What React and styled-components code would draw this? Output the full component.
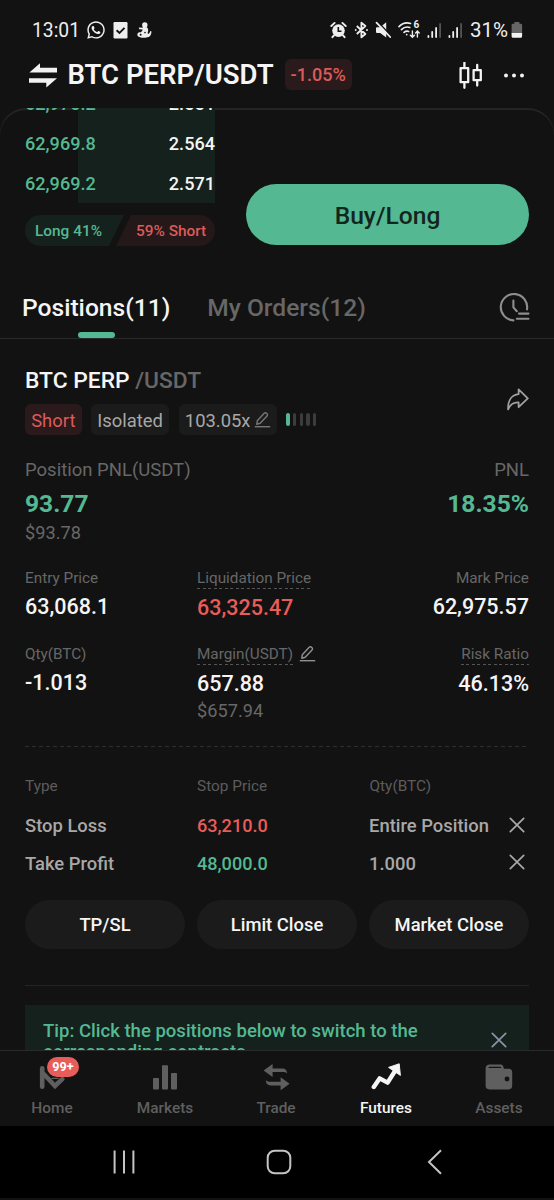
import React from "react";
import styled, { createGlobalStyle } from "styled-components";
import { FaWhatsapp } from "react-icons/fa";

const stops = [
	{ type: "Stop Loss", price: "63,210.0", tone: "red", qty: "Entire Position" },
	{ type: "Take Profit", price: "48,000.0", tone: "green", qty: "1.000" },
];

const bids = [
	{ price: "62,970.2", amount: "2.551" },
	{ price: "62,969.8", amount: "2.564" },
	{ price: "62,969.2", amount: "2.571" },
];

const EditIcon = ({ className }) => (
	<svg className={className} width="17" height="17" viewBox="0 0 17 17" fill="none" stroke="currentColor">
		<path d="M2.8 13.2 3.3 9.7 10.2 2.2a1.6 1.6 0 0 1 2.3 0l.5.5a1.6 1.6 0 0 1 0 2.3L6.2 12.3Z" strokeWidth="1.4" strokeLinejoin="round" />
		<path d="M.8 15.7h15.4" strokeWidth="1.4" />
	</svg>
);

const CloseIcon = () => (
	<svg width="16" height="16" viewBox="0 0 16 16" stroke="currentColor" strokeWidth="1.7" strokeLinecap="round">
		<path d="M1.3 1.3 14.7 14.7M14.7 1.3 1.3 14.7" />
	</svg>
);

function SignalIcon() {
	return (
		<svg width="15" height="17" viewBox="0 0 15 17" fill="currentColor">
			<rect x=".5" y="13" width="1.8" height="3" rx=".9" />
			<rect x="4.3" y="9" width="1.8" height="7" rx=".9" />
			<rect x="8.2" y="5" width="1.8" height="11" rx=".9" />
			<rect x="12.2" y="1" width="1.8" height="15" rx=".9" opacity=".3" />
		</svg>
	);
}

function StatusBar() {
	return (
		<StyledStatus>
			<Clock>13:01</Clock>
			<StatusIcons $gap={7}>
				<FaWhatsapp size={20} />
				<svg width="15" height="18" viewBox="0 0 15 18">
					<rect x=".5" y="1" width="14" height="16.5" rx="1.2" fill="#eee" />
					<path d="M3.6 9.2 6.5 12l5-5.2" fill="none" stroke="#121212" strokeWidth="1.9" />
				</svg>
				<svg width="19" height="18" viewBox="-1 0 19 18">
					<circle cx="8.8" cy="4" r="2.7" fill="#eee" />
					<path d="M7 5.6c2.800-.6 5.200 1 5.200 3.400 0 1.800-.8 2.600-.4 3.600.9.7 1.900-.3 2.400-2.600l1.300.4c-.2 3.600-1.800 5.800-4.300 5.800-2 .8-5 .8-7.200 0C2 16 1 14.600 1.400 13c.4-1.400 1.800-1.800 3.200-1.600 1.200-.6 2-1.600 2-2.800l-3.400-.4-.4-1.600 3.800.2z" fill="#eee" />
					<circle cx="4.6" cy="13.8" r="1" fill="#121212" />
					<circle cx="9" cy="11.6" r=".8" fill="#121212" />
				</svg>
			</StatusIcons>
			<StatusIcons $gap={6.3} $end>
				<svg width="17" height="18" viewBox="0 0 17 18">
					<circle cx="8.5" cy="9.6" r="6.3" fill="#eee" />
					<path d="M8.3 6v4.3h3.2" fill="none" stroke="#121212" strokeWidth="1.6" />
					<path d="M1.3 5 4.6 1.9M15.7 5 12.4 1.9M4 14.3 2.4 16.2M13 14.3l1.6 1.9" stroke="#eee" strokeWidth="1.9" strokeLinecap="round" />
				</svg>
				<svg width="15" height="18" viewBox="0 0 15 18" fill="none" stroke="#eee" strokeWidth="1.8">
					<path d="M2.8 5l8.6 8-4 3.4V1.6l4 3.4-8.6 8" strokeLinejoin="round" />
					<circle cx="1.7" cy="9" r=".6" fill="#eee" strokeWidth="1" />
					<circle cx="13" cy="9" r=".6" fill="#eee" strokeWidth="1" />
				</svg>
				<svg width="17" height="18" viewBox="0 0 17 18">
					<path d="M2 6.2h3.2L11.2 1.2V16.5L5.2 12H2a1 1 0 0 1-1-1V7.2a1 1 0 0 1 1-1z" fill="#eee" />
					<path d="M2.6.6 17 15.8" stroke="#121212" strokeWidth="1.4" />
					<path d="M1.5 1.6 15.2 16" stroke="#eee" strokeWidth="1.8" strokeLinecap="round" />
				</svg>
				<WifiBox>
					<svg width="22" height="18" viewBox="0 0 22 18" fill="none" stroke="#eee" strokeWidth="1.6" strokeLinecap="round">
						<path d="M1 5.6C4.2 2.3 8.4 1.2 12.6 2.4" />
						<path d="M3.4 8.6c2.4-2.4 5.4-3.1 8.4-2.2" />
						<path d="M6 11.4c1.4-1.2 3-1.6 4.7-1" />
						<circle cx="8.7" cy="13.6" r=".9" fill="#eee" stroke="none" />
						<path d="M14.4 10v6M12.4 14.2l2 2 2-2M19.4 16v-5.6M17.6 12l1.8-1.9L21.2 12" strokeWidth="1.4" />
					</svg>
					<WifiSix>6</WifiSix>
				</WifiBox>
				<SignalIcon />
				<SignalIcon />
			</StatusIcons>
			<Battery>31%</Battery>
			<svg width="12" height="18" viewBox="0 0 12 18">
				<path d="M3.4 1h5v1.7h1.4A1.3 1.3 0 0 1 11.1 4v9H.6V4a1.3 1.3 0 0 1 1.3-1.3h1.5z" fill="#666" />
				<path d="M.6 12h10.5v3.2a1.5 1.5 0 0 1-1.5 1.5H2.1A1.5 1.5 0 0 1 .6 15.2z" fill="#f2f2f2" />
			</svg>
		</StyledStatus>
	);
}

function Header() {
	return (
		<StyledHeader>
			<svg width="28" height="25" viewBox="0 0 28 25" fill="#f2f2f2">
				<path d="M.4 9.4 11 .2v4.6h17v4.6zM28 15.2 17.3 24.4v-4.6H0v-4.6z" />
			</svg>
			<Pair>BTC PERP/USDT</Pair>
			<ChangeBadge>-1.05%</ChangeBadge>
			<HeaderActions>
				<svg width="24" height="27" viewBox="0 0 24 27" fill="none" stroke="#f2f2f2" strokeWidth="2.3">
					<path d="M1.6 6.2h7.6v14H1.6zM5.4.6v5.6M5.4 20.2v5.6M14.6 8.2h7.2v10h-7.2zM18.2 3v5.2M18.2 18.2v5.4" strokeLinejoin="round" strokeLinecap="round" />
				</svg>
				<svg width="20" height="5" viewBox="0 0 20 5" fill="#f2f2f2">
					<circle cx="2" cy="2.5" r="2" />
					<circle cx="10" cy="2.5" r="2" />
					<circle cx="18" cy="2.5" r="2" />
				</svg>
			</HeaderActions>
		</StyledHeader>
	);
}

function OrderBook() {
	return (
		<Book>
			<Bids>
				{bids.map((b) => (
					<BidRow key={b.price}>
						<span>{b.price}</span>
						<b>{b.amount}</b>
					</BidRow>
				))}
			</Bids>
			<Ratio>
				<RatioSide $long>Long 41%</RatioSide>
				<RatioSide>59% Short</RatioSide>
			</Ratio>
		</Book>
	);
}

function Position() {
	return (
		<Card>
			<TitleRow>
				BTC PERP <span>/USDT</span>
			</TitleRow>
			<Tags>
				<Tag $short>Short</Tag>
				<Tag>Isolated</Tag>
				<Tag>
					103.05x <TagEdit />
				</Tag>
				<Meter>
					<i />
					<i />
					<i />
					<i />
					<i />
				</Meter>
				<Share width="22" height="23" viewBox="0 0 22 23" fill="none" stroke="#a0a0a0" strokeWidth="1.8" strokeLinejoin="round">
					<path d="M11.6 1.4 20.8 10.4 11.6 19.2V14.4C6.6 14 3.4 16 1.1 21.4.8 12.8 4.6 7 11.6 6.2Z" />
				</Share>
			</Tags>
			<PnlHead>
				<span>Position PNL(USDT)</span>
				<span>PNL</span>
			</PnlHead>
			<PnlRow>
				<span>93.77</span>
				<span>18.35%</span>
			</PnlRow>
			<Sub>$93.78</Sub>
			<Stats>
				<Stat>
					<Label>Entry Price</Label>
					<Value>63,068.1</Value>
				</Stat>
				<Stat>
					<Label $dashed>Liquidation Price</Label>
					<Value $tone="red">63,325.47</Value>
				</Stat>
				<Stat $end>
					<Label>Mark Price</Label>
					<Value>62,975.57</Value>
				</Stat>
				<Stat>
					<Label>Qty(BTC)</Label>
					<Value>-1.013</Value>
				</Stat>
				<Stat>
					<LabelLine>
						<Label $dashed>Margin(USDT)</Label>
						<EditIcon />
					</LabelLine>
					<Value>657.88</Value>
					<MarginSub>$657.94</MarginSub>
				</Stat>
				<Stat $end>
					<Label $dashed>Risk Ratio</Label>
					<Value>46.13%</Value>
				</Stat>
			</Stats>
			<StopTable>
				<StopHead>
					<span>Type</span>
					<span>Stop Price</span>
					<span>Qty(BTC)</span>
				</StopHead>
				{stops.map((s) => (
					<StopRow key={s.type}>
						<span>{s.type}</span>
						<StopPrice $tone={s.tone}>{s.price}</StopPrice>
						<span>{s.qty}</span>
						<CloseIcon />
					</StopRow>
				))}
			</StopTable>
			<Actions>
				<ActionButton>TP/SL</ActionButton>
				<ActionButton>Limit Close</ActionButton>
				<ActionButton>Market Close</ActionButton>
			</Actions>
			<Tip>
				<p>
					Tip: Click the positions below to switch to the
					<br />
					corresponding contracts.
				</p>
				<CloseIcon />
			</Tip>
		</Card>
	);
}

function BottomNav() {
	return (
		<StyledNav>
			<NavItem>
				<NavIcon>
					<svg width="26" height="28" viewBox="0 0 26 28" fill="none" stroke="currentColor" strokeLinecap="round">
						<path d="M3.2 5.2v18.6" strokeWidth="4.6" />
						<path d="M5 11.2 16 23l7.2-6.800" strokeWidth="4.6" />
						<path d="M13 15.4h6" strokeWidth="1.4" />
					</svg>
					<NavBadge>99+</NavBadge>
				</NavIcon>
				Home
			</NavItem>
			<NavItem>
				<svg width="26" height="28" viewBox="0 0 26 28" fill="currentColor">
					<rect x="1" y="15" width="6" height="11.4" rx=".8" />
					<rect x="10" y="2.2" width="6" height="24.2" rx=".8" />
					<rect x="19" y="10" width="6" height="16.4" rx=".8" />
				</svg>
				Markets
			</NavItem>
			<NavItem>
				<svg width="27" height="28" viewBox="0 0 27 28">
					<path d="M9.6 1v4.6h9.8c3 0 4.6 1.6 4.6 4.8-1.2-1-2.4-1.4-4.4-1.4h-10V14L.6 7.4zM17.6 14.2v4.6H7.6c-2 0-3.4-.4-4.8-1.6 0 3.4 1.8 5.2 4.8 5.2h10v4.8l9-6.4z" fill="currentColor" />
				</svg>
				Trade
			</NavItem>
			<NavItem $active>
				<svg width="30" height="28" viewBox="0 0 30 28">
					<path d="M2.8 24 8.6 15.4 16.6 19.6 24 8" fill="none" stroke="currentColor" strokeWidth="4.4" strokeLinecap="round" strokeLinejoin="round" />
					<path d="M17.6 4.4 28.2.8 29.4 12.4z" fill="currentColor" stroke="currentColor" strokeWidth="1" strokeLinejoin="round" />
				</svg>
				Futures
			</NavItem>
			<NavItem>
				<svg width="28" height="28" viewBox="0 0 28 28">
					<path d="M4.6 1.6h10.6c1.6 0 2.6.6 3 2l.8 2.2h4.6c2.4 0 3.6 1.4 3.6 3.4v13.6c0 2.2-1.4 3.6-3.6 3.6H4.4C2 26.4.6 25 .6 22.8V5.6c0-2.6 1.6-4 4-4z" fill="currentColor" />
					<path d="M3.4 5c.2-.8.8-1.2 1.6-1.2h9.6c.9 0 1.5.4 1.8 1.2z" fill="#121212" />
					<circle cx="22" cy="16" r="2.4" fill="#121212" />
				</svg>
				Assets
			</NavItem>
		</StyledNav>
	);
}

export default function App() {
	return (
		<>
			<GlobalStyle />
			<Screen>
				<StatusBar />
				<Header />
				<Panel>
					<TradeArea>
						<OrderBook />
						<BuyButton>Buy/Long</BuyButton>
					</TradeArea>
					<Tabs>
						<TabItem $active>Positions(11)</TabItem>
						<TabItem>My Orders(12)</TabItem>
						<svg width="32" height="30" viewBox="0 0 32 30" fill="none" stroke="#8e8e8e" strokeWidth="2.1" strokeLinecap="round">
							<path d="M28 17.4A13.2 13.2 0 1 0 14.4 28.4" />
							<path d="M14.4 8.6v6.8l3.4 3.8M20 21.6h9.5M17.8 26.8h11.7" />
						</svg>
					</Tabs>
					<Position />
				</Panel>
				<BottomNav />
				<SystemBar>
					<svg width="22" height="26" viewBox="0 0 22 26" stroke="#c4c4c4" strokeWidth="2">
						<path d="M1.6 1.5v23M11 1.5v23M20.4 1.5v23" />
					</svg>
					<HomeKey width="26" height="26" viewBox="0 0 26 26" fill="none" stroke="#c4c4c4" strokeWidth="2">
						<rect x="1.7" y="1.7" width="22.6" height="22.6" rx="7" />
					</HomeKey>
					<svg width="16" height="26" viewBox="0 0 16 26" fill="none" stroke="#c4c4c4" strokeWidth="2">
						<path d="M14 1.2 2 13l12 11.8" />
					</svg>
				</SystemBar>
			</Screen>
		</>
	);
}

const tones = { red: "#e85d59", green: "#54b992" };

const GlobalStyle = createGlobalStyle`
	* {
		box-sizing: border-box;
	}
	body {
		margin: 0;
		background-color: #121212;
		font-family: Roboto, sans-serif;
	}
	p {
		margin: 0;
	}
	svg {
		display: block;
		flex: none;
	}
`;

const Screen = styled.div`
	width: 554px;
	height: 1200px;
	display: flex;
	flex-direction: column;
	overflow: hidden;
	background-color: #121212;
	color: #f5f5f5;
	font-weight: 500;
	white-space: nowrap;
`;

const StyledStatus = styled.div`
	height: 42px;
	padding: 18px 31px 0 32px;
	display: flex;
	align-items: center;
	color: #eeeeee;
`;

const Clock = styled.span`
	width: 54px;
	font-size: 19.3px;
	font-weight: 400;
`;

const StatusIcons = styled.div`
	display: flex;
	align-items: center;
	gap: ${(p) => p.$gap}px;
	margin-left: ${(p) => (p.$end ? "auto" : "0")};
`;

const WifiBox = styled.div`
	position: relative;
`;

const WifiSix = styled.span`
	position: absolute;
	top: -2px;
	right: 1px;
	font-size: 10px;
	line-height: 12px;
	font-weight: 700;
`;

const Battery = styled.span`
	margin: 0 3px 0 7px;
	font-size: 20.5px;
	font-weight: 400;
`;

const StyledHeader = styled.header`
	height: 66px;
	padding: 0 30px 0 29px;
	display: flex;
	align-items: center;
	flex: none;
`;

const Pair = styled.h1`
	margin: -2px 11px 0 10.5px;
	font-size: 27.5px;
	font-weight: 600;
`;

const ChangeBadge = styled.span`
	height: 31px;
	margin-top: -1px;
	padding: 0 6px;
	border-radius: 6px;
	background-color: #2b1a1b;
	color: #dc5b58;
	font-size: 18.1px;
	line-height: 32px;
`;

const HeaderActions = styled.div`
	margin-left: auto;
	display: flex;
	align-items: center;
	gap: 21.5px;
`;

const Panel = styled.main`
	height: 942px;
	flex: none;
	overflow: hidden;
	border-radius: 26px 26px 0 0;
	box-shadow: inset 0 2px 0 #242424;
`;

const TradeArea = styled.section`
	height: 156px;
	padding: 0 25px;
	display: flex;
	justify-content: space-between;
	align-items: flex-start;
`;

const Book = styled.div`
	width: 190px;
`;

const Bids = styled.div`
	height: 95px;
	display: flex;
	flex-direction: column;
	justify-content: flex-end;
	background: linear-gradient(#14211d, #14211d) right / 137px 100% no-repeat;
	margin-bottom: 12px;
`;

const BidRow = styled.div`
	height: 40px;
	flex: none;
	display: flex;
	justify-content: space-between;
	font-size: 18.1px;
	line-height: 42px;
	color: #54b992;

	b {
		font-weight: 500;
		color: #f5f5f5;
	}
`;

const Ratio = styled.div`
	display: flex;
	height: 31px;
	border-radius: 16px;
	overflow: hidden;
	font-size: 15.4px;
	line-height: 32px;
`;

const RatioSide = styled.div`
	width: 99px;
	flex: none;
	margin-left: ${(p) => (p.$long ? "0" : "-8px")};
	padding-left: ${(p) => (p.$long ? "10px" : "20px")};
	color: ${(p) => (p.$long ? "#54b992" : "#dc5b58")};
	background-color: ${(p) => (p.$long ? "#14211d" : "#241819")};
	clip-path: ${(p) => (p.$long ? "polygon(0 0, 100% 0, 84px 100%, 0 100%)" : "polygon(15px 0, 100% 0, 100% 100%, 0 100%)")};
`;

const BuyButton = styled.button`
	width: 283px;
	height: 61px;
	margin-top: 76px;
	padding: 1px 0 0;
	border: none;
	border-radius: 31px;
	background-color: #54b992;
	color: #12261e;
	font: 500 24.6px Roboto, sans-serif;
`;

const Tabs = styled.nav`
	height: 75px;
	padding: 0 23px 0 22px;
	display: flex;
	align-items: center;
	gap: 37px;
	border-bottom: 1px solid #2a2a2a;

	svg {
		margin: 12px 0 0 auto;
	}
`;

const TabItem = styled.div`
	position: relative;
	height: 75px;
	padding-top: 29px;
	font-size: 24.6px;
	line-height: 30px;
	color: ${(p) => (p.$active ? "#f5f5f5" : "#676767")};

	&::after {
		content: "";
		display: ${(p) => (p.$active ? "block" : "none")};
		position: absolute;
		left: 50%;
		bottom: 1px;
		width: 37px;
		height: 6px;
		margin-left: -18.5px;
		border-radius: 3px;
		background-color: #54b992;
	}
`;

const Card = styled.section`
	padding: 25px 25px 0;
`;

const TitleRow = styled.h2`
	margin: 0 0 8px;
	height: 32px;
	font-size: 22.8px;
	line-height: 33px;
	font-weight: 500;

	span {
		color: #676767;
	}
`;

const Tags = styled.div`
	display: flex;
	align-items: center;
	gap: 9.5px;
	height: 31px;
`;

const Tag = styled.span`
	display: flex;
	align-items: center;
	height: 31px;
	padding: 2px 6.2px 0;
	border-radius: 6px;
	font-size: 18.4px;
	font-weight: 400;
	color: ${(p) => (p.$short ? "#dc5b58" : "#a8a8a8")};
	background-color: ${(p) => (p.$short ? "#2b1a1b" : "#1b1b1b")};
`;

const TagEdit = styled(EditIcon)`
	margin: -3px -1px 0 4px;
	color: #777777;
`;

const Meter = styled.div`
	display: flex;
	gap: 3.2px;

	i {
		width: 3.5px;
		height: 12.5px;
		border-radius: 2px;
		background-color: #3c3c3c;
	}
	i:first-child {
		background-color: #54b992;
	}
`;

const Share = styled.svg`
	margin: -41px 0.5px 0 auto;
`;

const PnlHead = styled.div`
	margin-top: 20px;
	display: flex;
	justify-content: space-between;
	font-size: 18.5px;
	line-height: 31px;
	height: 30px;
	font-weight: 400;
	color: #676767;
`;

const PnlRow = styled.div`
	display: flex;
	justify-content: space-between;
	height: 38px;
	font-size: 24.6px;
	line-height: 38px;
	font-weight: 700;
	color: #54b992;
`;

const Sub = styled.div`
	height: 20px;
	font-size: 18.2px;
	line-height: 20px;
	font-weight: 400;
	color: #676767;
`;

const MarginSub = styled(Sub)`
	margin-top: -2px;
`;

const Stats = styled.div`
	margin-top: 24px;
	display: grid;
	grid-template-columns: 172px 1fr 1fr;
	row-gap: 16px;
`;

const Stat = styled.div`
	display: flex;
	flex-direction: column;
	align-items: ${(p) => (p.$end ? "flex-end" : "flex-start")};
`;

const LabelLine = styled.div`
	display: flex;
	gap: 5.5px;

	svg {
		margin-top: 2px;
		color: #909090;
	}
`;

const Label = styled.span`
	height: ${(p) => (p.$dashed ? 22 : 21)}px;
	font-size: 15.3px;
	line-height: 22px;
	font-weight: 400;
	color: #676767;
	background: ${(p) => (p.$dashed ? "repeating-linear-gradient(90deg, #555 0 3px, transparent 3px 5.5px) bottom / 100% 1px no-repeat" : "none")};
`;

const Value = styled.span`
	height: 38px;
	font-size: 21.5px;
	line-height: 38px;
	color: ${(p) => tones[p.$tone] || "#f5f5f5"};
`;

const StopTable = styled.div`
	margin-top: 25px;
	padding-top: 30px;
	background: repeating-linear-gradient(90deg, #2e2e2e 0 4px, transparent 4px 7px) top / 100% 1px no-repeat;
`;

const StopHead = styled.div`
	display: grid;
	grid-template-columns: 172px 172.5px 1fr;
	font-size: 15.4px;
	line-height: 20px;
	height: 30px;
	font-weight: 400;
	color: #5c5c5c;
`;

const StopRow = styled.div`
	display: grid;
	grid-template-columns: 172px 172px 1fr 16px;
	align-items: center;
	padding-right: 4px;
	height: 37.5px;
	font-size: 18.4px;
	line-height: 39px;
	color: #a8a8a8;

	svg {
		margin-top: -2px;
	}
`;

const StopPrice = styled.span`
	font-size: 18.1px;
	color: ${(p) => tones[p.$tone]};
`;

const Actions = styled.div`
	display: flex;
	gap: 12px;
	padding: 19px 0 36px;
	border-bottom: 1px solid #242424;
`;

const ActionButton = styled.button`
	flex: 1;
	height: 49px;
	padding: 0 0 1px;
	border: none;
	border-radius: 25px;
	background-color: #1b1b1b;
	color: #f5f5f5;
	font: 500 18.4px Roboto, sans-serif;
`;

const Tip = styled.div`
	margin-top: 19px;
	height: 70px;
	padding: 16px 22.5px 0 18px;
	display: flex;
	align-items: flex-start;
	justify-content: space-between;
	background-color: #14211d;
	color: #54b992;
	font-size: 18.55px;
	line-height: 21px;

	svg {
		margin-top: 11px;
		color: #8a94a3;
	}
`;

const StyledNav = styled.nav`
	height: 76px;
	flex: none;
	display: grid;
	grid-template-columns: 104px 122px 100px 120px 106px;
	border-top: 1px solid #2a2a2a;
`;

const NavItem = styled.div`
	padding-top: 12px;
	display: flex;
	flex-direction: column;
	align-items: center;
	gap: 7px;
	font-size: 15.4px;
	line-height: 21px;
	color: ${(p) => (p.$active ? "#f5f5f5" : "#5f5f5f")};
`;

const NavIcon = styled.div`
	position: relative;
`;

const NavBadge = styled.span`
	position: absolute;
	left: 8px;
	top: -6px;
	width: 32px;
	height: 20px;
	border-radius: 10px;
	background-color: #e85d59;
	color: #ffffff;
	font-size: 12.6px;
	line-height: 20px;
	font-weight: 700;
	text-align: center;
`;

const SystemBar = styled.div`
	height: 72px;
	flex: none;
	padding: 0 111px 0 113px;
	display: flex;
	align-items: center;
	justify-content: space-between;
	background-color: #000000;
`;

const HomeKey = styled.svg`
	margin-right: 5px;
`;
